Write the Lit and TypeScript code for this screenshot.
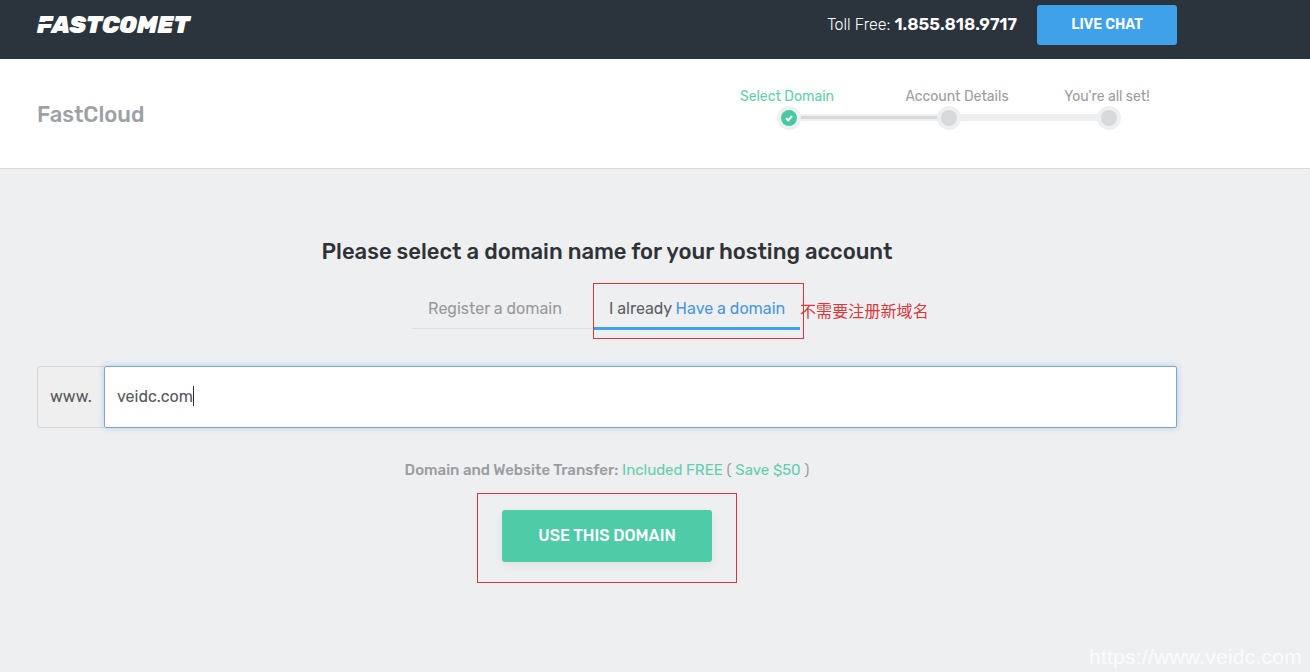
import { LitElement, html, css } from "lit";
import { customElement } from "lit/decorators.js";

@customElement("app-root")
export class AppRoot extends LitElement {
  static styles = css`
    :host { display: block; width: 1310px; height: 672px; overflow: hidden; background: #eeeff1; font-family: Rubik, Inter, "Noto Sans", sans-serif; position: relative; }
    * { box-sizing: border-box; }
    .top { height: 59px; background: #2b333c; display: flex; align-items: flex-start; padding: 5px 133px 0 37px; }
    .logo { position: relative; font-style: italic; font-weight: 900; font-size: 24px; line-height: 40px; color: #fff; letter-spacing: -0.1px; }
    .slit { position: absolute; left: 2px; top: 17px; width: 14px; height: 1.5px; background: #2b333c; transform: skewX(-12deg); }
    .spacer { flex: 1; }
    .toll { color: #fff; font-size: 16px; font-weight: 300; line-height: 38px; margin-right: 20px; }
    .toll b { font-size: 17px; font-weight: 600; }
    .chat { width: 140px; height: 40px; background: #3fa1ea; border-radius: 3px; color: #fff; font-size: 14px; font-weight: 600; display: flex; align-items: center; justify-content: center; padding-bottom: 2px; }
    .sub { height: 110px; background: #fff; border-bottom: 1px solid #d8dadc; display: flex; justify-content: space-between; padding: 0 0 0 37px; position: relative; }
    .brand { font-size: 22px; font-weight: 500; color: #9ba1a5; line-height: 26px; margin-top: 43px; }
    .steps { width: 450px; margin-right: 150px; padding-top: 29px; display: flex; flex-direction: column; }
    .labels { display: grid; grid-template-columns: repeat(3, 160px); margin-left: -3px; font-size: 14px; line-height: 18px; color: #9a9da0; text-align: center; justify-content: start; }
    .labels .on { color: #63cdae; }
    .labels span:nth-child(2) { margin-left: 10px; margin-right: -10px; }
    .track { position: relative; width: 320px; height: 7px; margin: 8px 0 0 79px; background: #eeeff0; }
    .track .fill { position: absolute; left: 0; top: 2px; width: 160px; height: 3px; background: #d8d9db; }
    .dot { position: absolute; top: -8.5px; width: 24px; height: 24px; border-radius: 50%; background: #eeeff0; display: flex; align-items: center; justify-content: center; }
    .dot i { display: flex; align-items: center; justify-content: center; width: 16px; height: 16px; border-radius: 50%; background: #d8d9db; }
    .dot.on i { background: #48c9a4; }
    .main { display: flex; flex-direction: column; align-items: center; width: 1214px; padding-top: 70px; }
    h1 { margin: 0; font-size: 22px; line-height: 26px; font-weight: 500; color: #2f3337; }
    .tabs { display: flex; margin: 20px 2px 0 0; font-size: 16px; line-height: 20px; }
    .tab { width: 182px; height: 44px; padding: 14px 0 0 16px; border-bottom: 1px solid #dcdee0; color: #96999c; margin-bottom: 1px; }
    .tab.active { width: 206px; padding: 14px 0 0 15px; height: 45px; margin: 0; border-bottom: 3px solid #3fa1ea; color: #5d6063; }
    .tab.active a { color: #4a98dc; }
    .domain { display: flex; width: 1140px; height: 62px; margin-top: 36px; font-size: 16px; color: #54585c; }
    .www { width: 67px; background: #efefef; border: 1px solid #d4d6d8; border-right: 0; border-radius: 4px 0 0 4px; display: flex; align-items: center; padding: 0 0 1px 12px; }
    .field { flex: 1; background: #fff; border: 1px solid #7fa6c8; border-radius: 2px; box-shadow: 0 0 6px rgba(100,160,220,.45); display: flex; align-items: center; padding: 0 0 2px 12px; }
    .caret { width: 1px; height: 20px; background: #2a2d30; }
    .note { margin-top: 33px; font-size: 15px; line-height: 18px; color: #9a9da0; }
    .note b { font-weight: 500; }
    .note em { font-style: normal; color: #63cdae; }
    .go { width: 210px; height: 52px; margin-top: 31px; background: #4fcba8; border-radius: 3px; color: #fff; font-size: 16px; font-weight: 500; display: flex; align-items: center; justify-content: center; padding-bottom: 2px; box-shadow: 0 4px 10px rgba(0,0,0,.06); }
    .box { position: absolute; border: 1px solid #d2383c; }
    .b1 { left: 593px; top: 283px; width: 211px; height: 56px; }
    .b2 { left: 477px; top: 493px; width: 260px; height: 90px; }
    .hint { position: absolute; left: 800px; top: 300px; font: 16px/20px "Noto Sans CJK SC", sans-serif; letter-spacing: .1px; color: #d8383c; }
    .mark { position: absolute; left: 1089px; top: 645px; font: 21px/24px "Liberation Sans", sans-serif; letter-spacing: .25px; color: rgba(255,255,255,.75); }
  `;
  render() {
    return html`
      <div class="top">
        <div class="logo">FASTCOMET<span class="slit"></span></div>
        <div class="spacer"></div>
        <div class="toll">Toll Free: <b>1.855.818.9717</b></div>
        <div class="chat">LIVE CHAT</div>
      </div>
      <div class="sub">
        <div class="brand">FastCloud</div>
        <div class="steps">
          <div class="labels"><span class="on">Select Domain</span><span>Account Details</span><span>You're all set!</span></div>
          <div class="track">
            <div class="fill"></div>
            <div class="dot on" style="left:-12px"><i><svg width="10" height="10" viewBox="0 0 10 10"><path d="M2 5.2 4.2 7.3 8 3" fill="none" stroke="#fff" stroke-width="2"/></svg></i></div>
            <div class="dot" style="left:148px"><i></i></div>
            <div class="dot" style="left:308px"><i></i></div>
          </div>
        </div>
      </div>
      <div class="main">
        <h1>Please select a domain name for your hosting account</h1>
        <div class="tabs">
          <div class="tab">Register a domain</div>
          <div class="tab active">I already <a>Have a domain</a></div>
        </div>
        <div class="domain">
          <div class="www">www.</div>
          <div class="field">veidc.com<span class="caret"></span></div>
        </div>
        <div class="note"><b>Domain and Website Transfer:</b> <em>Included FREE</em> ( <em>Save $50</em> )</div>
        <div class="go">USE THIS DOMAIN</div>
      </div>
      <div class="box b1"></div>
      <div class="box b2"></div>
      <div class="hint">不需要注册新域名</div>
      <div class="mark">https://www.veidc.com</div>
    `;
  }
}
